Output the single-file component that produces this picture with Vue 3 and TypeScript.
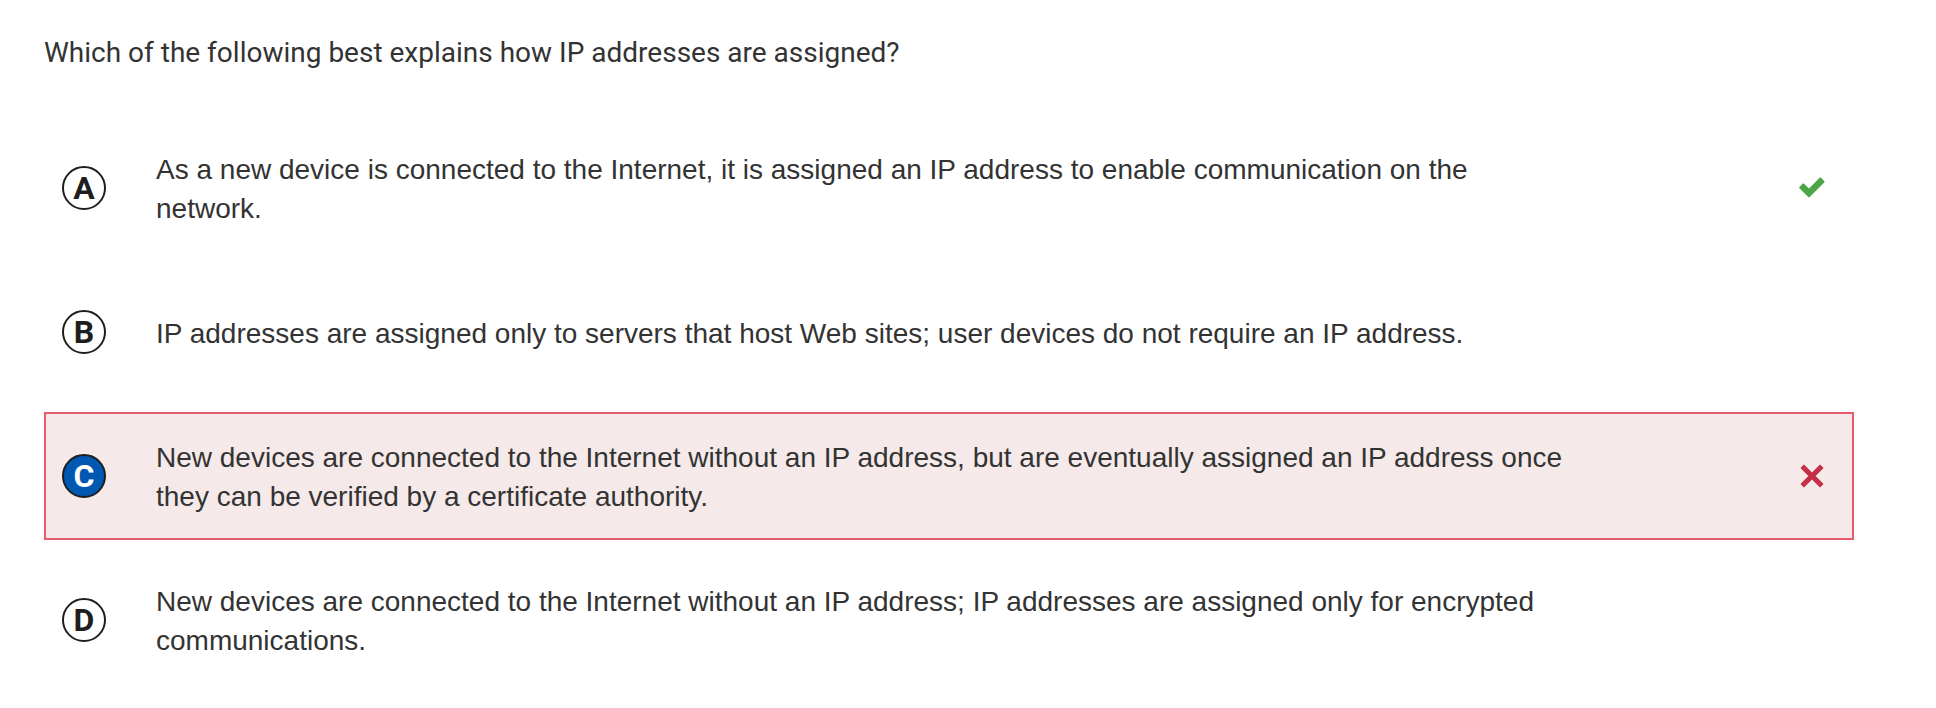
<script setup lang="ts">
import { ref } from 'vue'

interface Option {
  key: string
  text: string
  verdict?: 'correct' | 'incorrect'
}

const options: Option[] = [
  {
    key: 'A',
    text: 'As a new device is connected to the Internet, it is assigned an IP address to enable communication on the network.',
    verdict: 'correct',
  },
  {
    key: 'B',
    text: 'IP addresses are assigned only to servers that host Web sites; user devices do not require an IP address.',
  },
  {
    key: 'C',
    text: 'New devices are connected to the Internet without an IP address, but are eventually assigned an IP address once they can be verified by a certificate authority.',
    verdict: 'incorrect',
  },
  {
    key: 'D',
    text: 'New devices are connected to the Internet without an IP address; IP addresses are assigned only for encrypted communications.',
  },
]

const selected = ref<string>('C')
</script>

<template>
  <main class="question">
    <h1 id="prompt" class="prompt">Which of the following best explains how IP addresses are assigned?</h1>
    <div class="options" role="radiogroup" aria-labelledby="prompt">
      <label
        v-for="option in options"
        :key="option.key"
        class="option"
        :class="{ wrong: selected === option.key && option.verdict === 'incorrect' }"
      >
        <span class="marker">
          <input v-model="selected" class="radio" type="radio" name="answer" :value="option.key" />
          <span class="letter">{{ option.key }}</span>
        </span>
        <span class="text">{{ option.text }}</span>
        <svg v-if="option.verdict === 'correct'" class="icon" viewBox="0 0 28 28" aria-hidden="true">
          <path
            class="tick"
            d="M1.4 13 4.6 9.7Q5.3 9 6 9.7L11 14.6 21.6 3.8Q22.3 3.1 23 3.8L26.2 7Q26.9 7.7 26.2 8.4L11.7 23.1Q11 23.8 10.3 23.1L1.4 14.3Q.8 13.6 1.4 13Z"
          />
        </svg>
        <svg v-else-if="option.verdict === 'incorrect'" class="icon" viewBox="0 0 28 28" aria-hidden="true">
          <path
            class="cross"
            d="M2.9 5.4 5.3 3Q5.9 2.4 6.5 3L14 10.4 21.5 3Q22.1 2.4 22.7 3L25.1 5.4Q25.7 6 25.1 6.6L17.6 14 25.1 21.4Q25.7 22 25.1 22.6L22.7 25Q22.1 25.6 21.5 25L14 17.6 6.5 25Q5.9 25.6 5.3 25L2.9 22.6Q2.3 22 2.9 21.4L10.4 14 2.9 6.6Q2.3 6 2.9 5.4Z"
          />
        </svg>
      </label>
    </div>
  </main>
</template>

<style>
body {
  margin: 0;
  background: #fff;
}
</style>

<style scoped>
.question {
  padding: 33px 82px 40px 44px;
  color: #333;
  font-family: "Helvetica Neue", "Liberation Sans", Arial, sans-serif;
  font-size: 28px;
  line-height: 39px;
}

.prompt {
  margin: 0 0 52px;
  font-family: Roboto, sans-serif;
  font-size: 28px;
  font-weight: 400;
  line-height: 39px;
}

.options {
  display: grid;
  gap: 16px;
}

.option {
  display: grid;
  grid-template-columns: 44px minmax(0, 1fr) 28px;
  align-items: center;
  min-height: 128px;
  padding: 16px 26px 16px 16px;
  border: 2px solid transparent;
  box-sizing: border-box;
  cursor: pointer;
}

.option.wrong {
  border-color: #e65c6c;
  background: #f5e9e9;
}

.marker {
  display: grid;
  place-items: center;
}

.radio,
.letter {
  grid-area: 1 / 1;
}

.radio {
  appearance: none;
  width: 44px;
  height: 44px;
  margin: 0;
  border: 2px solid #1e1e1e;
  border-radius: 50%;
  background: #fff;
  cursor: pointer;
}

.radio:checked {
  background: #0058b0;
}

.letter {
  z-index: 1;
  color: #1e1e1e;
  font-family: Roboto, sans-serif;
  font-size: 32px;
  font-weight: 700;
}

.radio:checked + .letter {
  color: #fff;
}

.text {
  padding: 2px 228px 0 50px;
}

.icon {
  width: 28px;
  height: 28px;
}

.tick {
  fill: #4ca647;
}

.cross {
  fill: #c22f46;
}
</style>
